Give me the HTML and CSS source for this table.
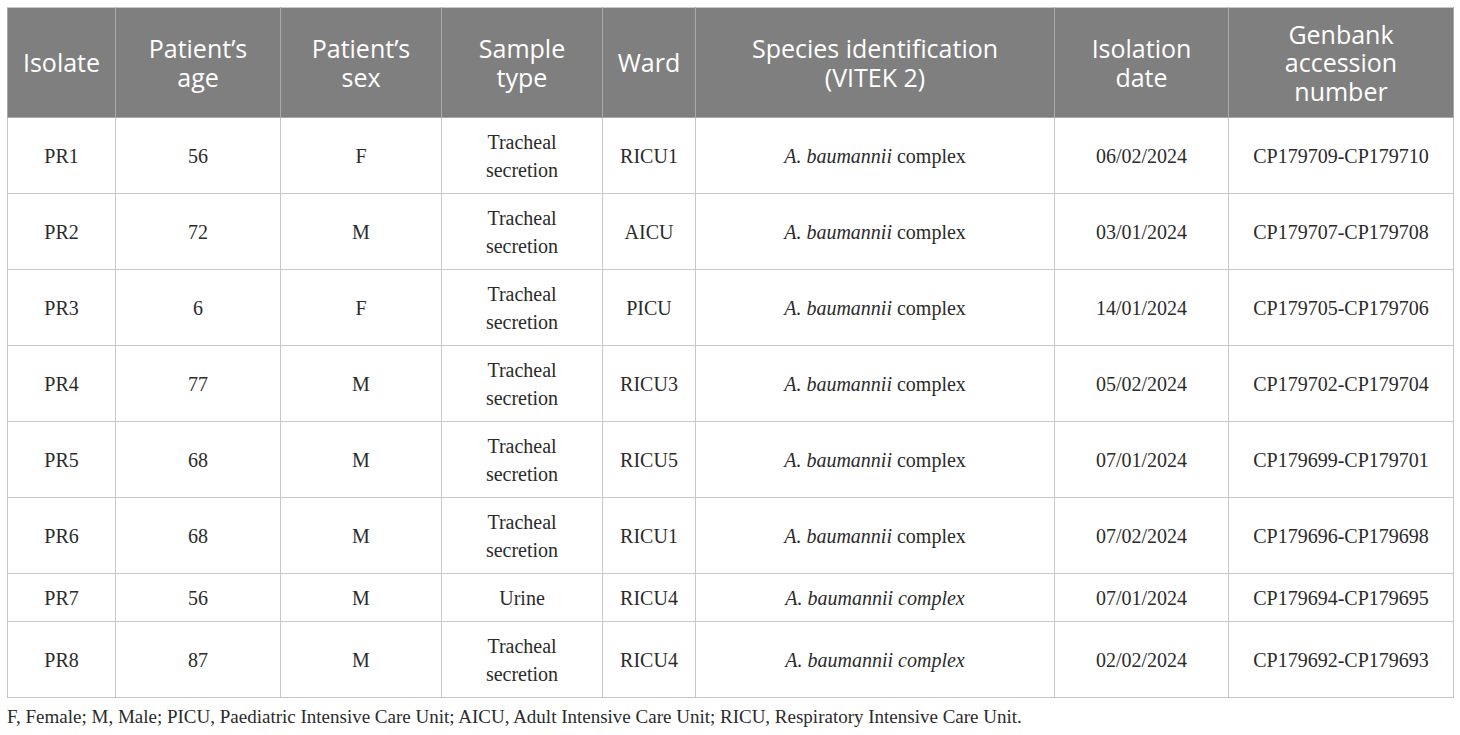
FILE: index.html
```html
<!DOCTYPE html>
<html lang="en">
<head>
<meta charset="UTF-8" />
<meta name="viewport" content="width=device-width, initial-scale=1" />
<title>Isolates table</title>
<link rel="stylesheet" href="styles.css">
</head>
<body>
<table class="data">
  <colgroup>
    <col class="c-iso"><col class="c-age"><col class="c-sex"><col class="c-type">
    <col class="c-ward"><col class="c-species"><col class="c-date"><col class="c-gb">
  </colgroup>
  <thead>
    <tr>
      <th>Isolate</th>
      <th>Patient’s<br>age</th>
      <th>Patient’s<br>sex</th>
      <th>Sample<br>type</th>
      <th>Ward</th>
      <th>Species identification<br>(VITEK 2)</th>
      <th>Isolation<br>date</th>
      <th>Genbank<br>accession<br>number</th>
    </tr>
  </thead>
  <tbody>
    <tr>
      <td>PR1</td><td>56</td><td>F</td><td>Tracheal<br>secretion</td><td>RICU1</td>
      <td><i>A. baumannii</i> complex</td><td>06/02/2024</td><td>CP179709-CP179710</td>
    </tr>
    <tr>
      <td>PR2</td><td>72</td><td>M</td><td>Tracheal<br>secretion</td><td>AICU</td>
      <td><i>A. baumannii</i> complex</td><td>03/01/2024</td><td>CP179707-CP179708</td>
    </tr>
    <tr>
      <td>PR3</td><td>6</td><td>F</td><td>Tracheal<br>secretion</td><td>PICU</td>
      <td><i>A. baumannii</i> complex</td><td>14/01/2024</td><td>CP179705-CP179706</td>
    </tr>
    <tr>
      <td>PR4</td><td>77</td><td>M</td><td>Tracheal<br>secretion</td><td>RICU3</td>
      <td><i>A. baumannii</i> complex</td><td>05/02/2024</td><td>CP179702-CP179704</td>
    </tr>
    <tr>
      <td>PR5</td><td>68</td><td>M</td><td>Tracheal<br>secretion</td><td>RICU5</td>
      <td><i>A. baumannii</i> complex</td><td>07/01/2024</td><td>CP179699-CP179701</td>
    </tr>
    <tr>
      <td>PR6</td><td>68</td><td>M</td><td>Tracheal<br>secretion</td><td>RICU1</td>
      <td><i>A. baumannii</i> complex</td><td>07/02/2024</td><td>CP179696-CP179698</td>
    </tr>
    <tr>
      <td>PR7</td><td>56</td><td>M</td><td>Urine</td><td>RICU4</td>
      <td><i>A. baumannii complex</i></td><td>07/01/2024</td><td>CP179694-CP179695</td>
    </tr>
    <tr>
      <td>PR8</td><td>87</td><td>M</td><td>Tracheal<br>secretion</td><td>RICU4</td>
      <td><i>A. baumannii complex</i></td><td>02/02/2024</td><td>CP179692-CP179693</td>
    </tr>
  </tbody>
</table>
<p class="note">F, Female; M, Male; PICU, Paediatric Intensive Care Unit; AICU, Adult Intensive Care Unit; RICU, Respiratory Intensive Care Unit.</p>
</body>
</html>
```

FILE: styles.css
```css
body {
  margin: 0;
  padding: 7px 0 0 7px;
  background: #fff;
  color: #2b2b2b;
  font-family: 'Liberation Serif', 'Times New Roman', serif;
}
.data {
  border-collapse: collapse;
  table-layout: fixed;
  width: 1446px;
}
.c-iso { width: 108px; }
.c-age { width: 165px; }
.c-sex { width: 161px; }
.c-type { width: 161px; }
.c-ward { width: 93px; }
.c-species { width: 359px; }
.c-date { width: 174px; }
.c-gb { width: 225px; }
.data th {
  background: #7f7f7f;
  color: #fff;
  font-family: 'Open Sans', 'Noto Sans', sans-serif;
  font-weight: 400;
  font-size: 25px;
  line-height: 28.5px;
  height: 109px;
  padding: 0 8px;
  text-align: center;
  vertical-align: middle;
  border: 1px solid #a9a9a9;
  border-top-color: #c8c8c8;
}
.data td {
  font-size: 20px;
  line-height: 28px;
  padding: 10px 6px 9px;
  text-align: center;
  vertical-align: middle;
  border: 1px solid #c8c8c8;
}
.note {
  margin: 8px 0 0 0;
  font-size: 19px;
  line-height: 21px;
  color: #2b2b2b;
}
```
